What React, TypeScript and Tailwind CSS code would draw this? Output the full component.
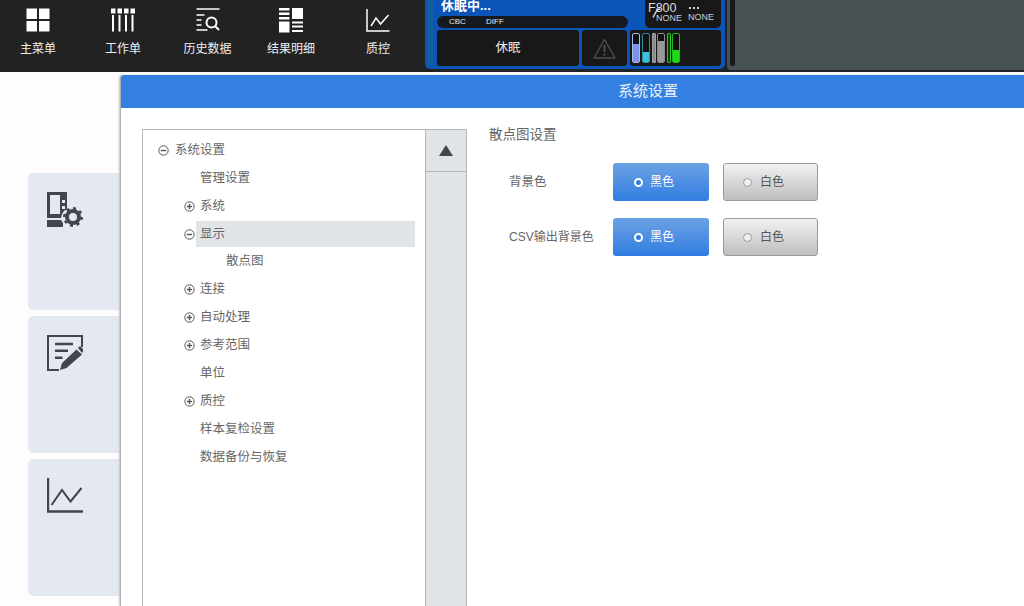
import React from "react";

const FONT = "font-['Liberation_Sans','Noto_Sans_CJK_SC',sans-serif]";

function NavIcon({ kind }: { kind: number }) {
  if (kind === 0)
    return (
      <svg width="24" height="24" viewBox="0 0 24 24" fill="#fff">
        <rect x="0.5" y="0.5" width="10.5" height="10.5" />
        <rect x="13" y="0.5" width="10.5" height="10.5" />
        <rect x="0.5" y="13" width="10.5" height="10.5" />
        <rect x="13" y="13" width="10.5" height="10.5" />
      </svg>
    );
  if (kind === 1)
    return (
      <svg width="24" height="24" viewBox="0 0 24 24" fill="#fff">
        {[0, 6.5, 13, 19.5].map((x) => (
          <g key={x}>
            <rect x={x} y="0.5" width="4.5" height="5" />
            <rect x={x + 1} y="7" width="2" height="16.5" />
          </g>
        ))}
      </svg>
    );
  if (kind === 2)
    return (
      <svg width="24" height="24" viewBox="0 0 24 24" fill="none" stroke="#fff" strokeWidth="1.4">
        <path d="M0.5 1h23M0.5 7h8M0.5 12h5M0.5 17h5M0.5 22h11" />
        <circle cx="15.5" cy="14.5" r="5" strokeWidth="2" />
        <path d="M19 18l4 4" strokeWidth="2" />
      </svg>
    );
  if (kind === 3)
    return (
      <svg width="24" height="26" viewBox="0 0 24 26" fill="#fff">
        <rect x="0" y="1" width="10.5" height="2.5" />
        <rect x="0" y="5.5" width="10.5" height="2.5" />
        <rect x="0" y="10" width="10.5" height="2.5" />
        <rect x="0" y="14.5" width="10.5" height="11" />
        <rect x="13" y="1" width="11" height="11" />
        <rect x="13" y="14.5" width="11" height="2" />
        <rect x="13" y="18.5" width="11" height="2" />
        <rect x="13" y="23" width="11" height="2" />
      </svg>
    );
  return (
    <svg width="24" height="24" viewBox="0 0 24 24" fill="none" stroke="#fff" strokeWidth="1.5">
      <path d="M1 1v22h22.5" />
      <path d="M5 18l5-8 4.5 6 8-9" />
    </svg>
  );
}

function NavItem({ kind, label, w }: { kind: number; label: string; w: string }) {
  return (
    <div className={`flex flex-col items-center ${w}`}>
      <div className="h-[24px] mt-[8px] flex items-center justify-center">
        <NavIcon kind={kind} />
      </div>
      <div className="mt-[9px] text-[12px] leading-[16px] text-[#eeeeee]">{label}</div>
    </div>
  );
}

function Bar({ color, level, border, gap }: { color: string; level: string; border: string; gap: string }) {
  return (
    <div className={`relative w-[8px] h-[30px] rounded-[2px] border bg-[#111] overflow-hidden ${border} ${gap}`}>
      <div className={`absolute left-0 right-0 bottom-0 ${color} ${level}`} />
    </div>
  );
}

function StatusPanel() {
  return (
    <div className="w-[300px] h-[69px] bg-[#0b55b8] rounded-b-[5px] flex flex-row shrink-0">
      <div className="w-[5px] h-[66px] bg-[#14609f] ml-[3px] rounded-b-[2px]" />
      <div className="flex-1 flex flex-col pl-[4px] pr-[4px]">
        <div className="flex h-[28px] gap-[16px]">
          <div className="w-[191px] flex flex-col">
            <div className="h-[16px] pl-[4px] text-[13px] leading-[12px] font-bold text-white">休眠中...</div>
            <div className="h-[12px] rounded-[6px] bg-[#151a20] flex items-center text-[8px] text-[#e8e8e8]">
              <span className="ml-[12px] w-[37px]">CBC</span>
              <span>DIFF</span>
            </div>
          </div>
          <div className="w-[76px] ml-[1px] h-[28px] rounded-b-[5px] bg-[#181818] relative text-[#dddddd]">
            <span className="absolute left-[3px] top-[2px] text-[12.5px] leading-[12px]">F800</span>
            <svg className="absolute left-[7px] top-[8px]" width="9" height="10" viewBox="0 0 9 10" fill="none" stroke="#d8d8d8" strokeWidth="1.5">
              <path d="M1 9.5L5 2l3-1" />
            </svg>
            <span className="absolute left-[11px] top-[14px] text-[9px] leading-[9px] font-medium text-[#cfcfcf]">NONE</span>
            <span className="absolute left-[43px] top-[13px] text-[9px] leading-[9px] font-medium text-[#cfcfcf]">NONE</span>
            <span className="absolute left-[44px] top-[7px] w-[10px] h-[2px] border-t-2 border-dotted border-[#cfcfcf]" />
          </div>
        </div>
        <div className="flex h-[36px] mt-[2px] gap-[3px]">
          <div className="w-[142px] rounded-[3px] bg-[#181818] flex items-center justify-center text-[12.5px] text-[#eeeeee]">休眠</div>
          <div className="w-[45px] rounded-[3px] bg-[#181818] flex items-center justify-center">
            <svg width="23" height="21" viewBox="0 0 23 21" fill="none" stroke="#4d4d4d" strokeWidth="1.4">
              <path d="M11.5 1.5L22 20H1z" strokeLinejoin="round" />
              <path d="M11.5 7v7M11.5 15.5v2" strokeWidth="2" />
            </svg>
          </div>
          <div className="w-[91px] rounded-[3px] bg-[#181818] flex items-center pl-[2px]">
            <Bar color="bg-[#7b93e8]" level="h-[18px]" border="border-[#a9b8ee]" gap="" />
            <Bar color="bg-[#3cc0dc]" level="h-[10px]" border="border-[#2f8ba3]" gap="ml-[2px]" />
            <div className="w-[4px] h-[30px] ml-[2px] rounded-[1px] bg-[#8a8a8a] border border-[#a0a0a0]" />
            <Bar color="bg-[#999]" level="h-[21px]" border="border-[#8a8a8a]" gap="ml-[1px]" />
            <div className="w-[4px] h-[30px] ml-[2px] border border-[#1fd31f] rounded-[1px] bg-[#0d3a0d]" />
            <Bar color="bg-[#16dd16]" level="h-[12px]" border="border-[#1fb81f]" gap="ml-[1px]" />
          </div>
        </div>
      </div>
    </div>
  );
}

function Circle({ plus }: { plus: boolean }) {
  return (
    <svg width="11" height="11" viewBox="0 0 11 11" fill="none" stroke="#555" strokeWidth="1">
      <circle cx="5.5" cy="5.5" r="4.7" />
      <path d="M2.8 5.5h5.4" strokeWidth="1.4" />
      {plus && <path d="M5.5 2.8v5.4" strokeWidth="1.4" />}
    </svg>
  );
}

function TreeRow({
  label,
  pad,
  icon,
  selected,
  extra,
  iconBox,
}: {
  label: string;
  pad: string;
  icon?: "plus" | "minus";
  selected?: boolean;
  extra?: string;
  iconBox?: string;
}) {
  return (
    <div className={`relative h-[28px] flex items-center ${pad} ${extra ?? ""}`}>
      {selected && <div className="absolute left-[53px] top-[1px] w-[219px] h-[26px] bg-[#e1e4e7]" />}
      {icon && (
        <span className={`relative flex items-center shrink-0 pt-[1px] ${iconBox ?? "w-[16px] -ml-[16px]"}`}>
          <Circle plus={icon === "plus"} />
        </span>
      )}
      <span className="relative text-[12.5px] text-[#666666]">{label}</span>
    </div>
  );
}

function SideCard({ children }: { children: React.ReactNode }) {
  return <div className="w-[92px] h-[137px] rounded-l-[5px] bg-[#e3e8f1] pl-[19px] pt-[19px]">{children}</div>;
}

function DeviceIcon() {
  return (
    <svg width="36" height="36" viewBox="0 0 36 36">
      <path fillRule="evenodd" fill="#40464c" d="M0 0h20v17a9 9 0 0 0-5 5l-1 4H0zM3 3v19h10V3zM15 8h3v3h-3zM15 14h3v3h-3z" />
      <path fill="#40464c" d="M0 28h14l2 3v4H0z" />
      <circle cx="26" cy="25" r="6" fill="none" stroke="#40464c" strokeWidth="4" />
      <circle cx="26" cy="25" r="8.7" fill="none" stroke="#40464c" strokeWidth="2.5" strokeDasharray="3 3.8" />
    </svg>
  );
}

function NoteIcon() {
  return (
    <svg width="36" height="36" viewBox="0 0 36 36">
      <path d="M35 12V1H1v34h11" fill="none" stroke="#40464c" strokeWidth="2" />
      <path d="M8 9h18M8 15.7h13M8 22.7h7.5" stroke="#40464c" strokeWidth="2.6" />
      <path fill="#40464c" d="M29.5 14.5l5.5 5-15.5 13.5-6.5 2 2-7zM31 13l2-2 4 4-2 3z" />
    </svg>
  );
}

function ChartIcon() {
  return (
    <svg width="36" height="36" viewBox="0 0 36 36" fill="none" stroke="#40464c" strokeWidth="2">
      <path d="M1 0v33.5h35" strokeWidth="2.4" />
      <path d="M4.5 27L15 12l8.5 11.5L34.5 10" />
    </svg>
  );
}

function RadioBtn({ label, on }: { label: string; on: boolean }) {
  return (
    <div
      className={`h-[38px] rounded-[3px] flex items-center text-[12px] ${
        on
          ? "w-[96px] pl-[21px] bg-gradient-to-b from-[#6ba1e3] to-[#2f7de1] text-white"
          : "w-[95px] pl-[19px] border border-[#9a9a9a] bg-gradient-to-b from-[#f2f2f2] to-[#bebec0] text-[#555555]"
      }`}
    >
      <span
        className={`w-[9px] h-[9px] rounded-full ${
          on ? "mr-[7px] border-2 border-white bg-[#2f7de1]" : "mr-[8px] border border-[#999999] bg-[#f0f0f0]"
        }`}
      />
      {label}
    </div>
  );
}

function SettingRow({ label, size }: { label: string; size: string }) {
  return (
    <div className="flex items-center h-[38px]">
      <div className={`w-[124px] pl-[20px] text-[#666666] whitespace-nowrap ${size}`}>{label}</div>
      <RadioBtn label="黑色" on />
      <div className="w-[14px]" />
      <RadioBtn label="白色" on={false} />
    </div>
  );
}

export default function App() {
  return (
    <div className={`w-[1024px] h-[606px] overflow-hidden bg-white flex flex-col ${FONT}`}>
      <div className="h-[72px] shrink-0 bg-[#222222] flex items-start">
        <div className="w-[425px] flex shrink-0">
          <NavItem kind={0} label="主菜单" w="w-[76px]" />
          <NavItem kind={1} label="工作单" w="w-[94px]" />
          <NavItem kind={2} label="历史数据" w="w-[75px]" />
          <NavItem kind={3} label="结果明细" w="w-[92px]" />
          <NavItem kind={4} label="质控" w="w-[82px]" />
        </div>
        <StatusPanel />
        <div className="flex-1 ml-[2px] h-[70px] bg-[#475053] rounded-bl-[4px] pl-[3px]">
          <div className="w-[5px] h-[66px] rounded-b-[2px] bg-[#1a1a1a]" />
        </div>
      </div>
      <div className="flex-1 flex min-h-0">
        <div className="w-[120px] shrink-0 pl-[28px] pt-[101px] flex flex-col gap-[6px] bg-[#fdfdfd]">
          <SideCard><DeviceIcon /></SideCard>
          <SideCard><NoteIcon /></SideCard>
          <SideCard><ChartIcon /></SideCard>
        </div>
        <div className="flex-1 mt-[3px] flex flex-col bg-white rounded-tl-[3px] border-l border-[#b0b0b0] shadow-[-1px_0_2px_#c4c4c4]">
          <div className="h-[33px] shrink-0 bg-[#3380e2] rounded-tl-[3px] flex items-center justify-center pl-[151px] text-[15px] text-[#e8f0fb]">
            系统设置
          </div>
          <div className="flex-1 flex min-h-0 pl-[21px] pt-[21px]">
            <div className="w-[325px] shrink-0 h-[500px] border border-[#b5b7b9] flex">
              <div className="flex-1 pt-[6px]">
                <TreeRow label="系统设置" pad="pl-[32px]" icon="minus" iconBox="w-[17px] -ml-[17px]" />
                <TreeRow label="管理设置" pad="pl-[57px]" />
                <TreeRow label="系统" pad="pl-[57px]" icon="plus" />
                <TreeRow label="显示" pad="pl-[57px]" icon="minus" selected />
                <TreeRow label="散点图" pad="pl-[83px]" extra="-mt-[1px]" />
                <TreeRow label="连接" pad="pl-[57px]" icon="plus" />
                <TreeRow label="自动处理" pad="pl-[57px]" icon="plus" />
                <TreeRow label="参考范围" pad="pl-[57px]" icon="plus" />
                <TreeRow label="单位" pad="pl-[57px]" />
                <TreeRow label="质控" pad="pl-[57px]" icon="plus" />
                <TreeRow label="样本复检设置" pad="pl-[57px]" />
                <TreeRow label="数据备份与恢复" pad="pl-[57px]" />
              </div>
              <div className="w-[41px] shrink-0 border-l border-[#b5b7b9] bg-[#e1e4e7]">
                <div className="h-[42px] border-b border-[#b5b7b9] flex items-center justify-center">
                  <svg width="14" height="11" viewBox="0 0 14 11"><path d="M7 0l7 11H0z" fill="#40464c" /></svg>
                </div>
              </div>
            </div>
            <div className="pl-[22px] flex-1">
              <div className="h-[12px] flex items-center text-[13.5px] text-[#666666]">散点图设置</div>
              <div className="mt-[22px] flex flex-col gap-[17px]">
                <SettingRow label="背景色" size="text-[12.5px]" />
                <SettingRow label="CSV输出背景色" size="text-[12px]" />
              </div>
            </div>
          </div>
        </div>
      </div>
    </div>
  );
}
